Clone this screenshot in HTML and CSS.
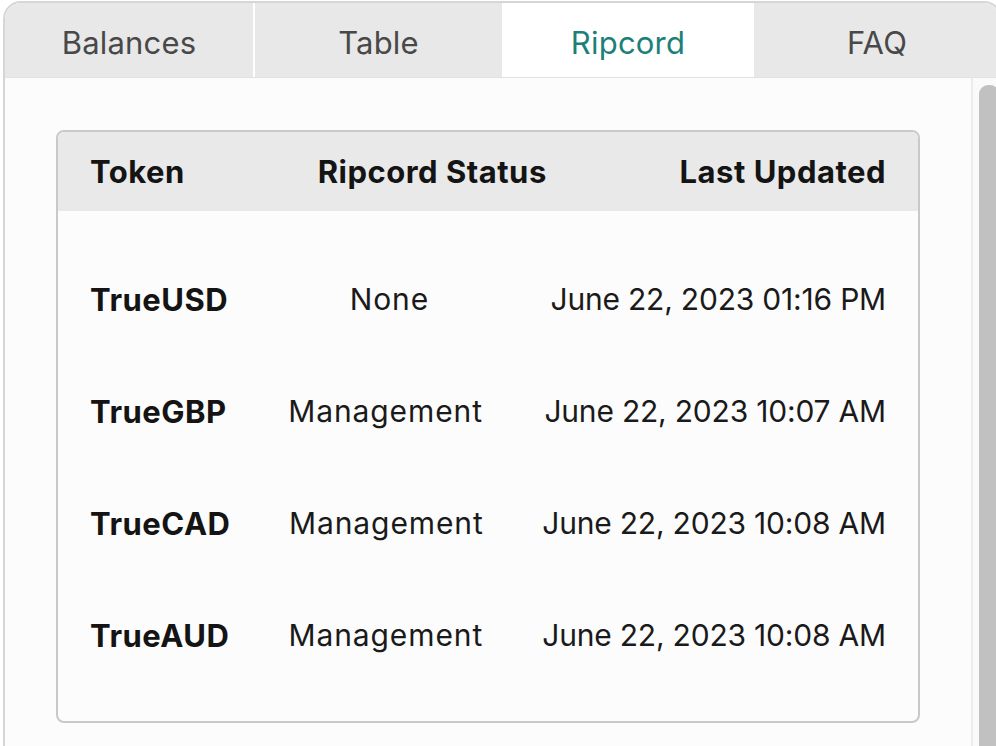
FILE: index.html
```html
<!DOCTYPE html>
<html>
<head>
<meta charset="utf-8">
<link rel="stylesheet" href="styles.css">
</head>
<body>
<div class="panel">
  <div class="tabs">
    <div class="tab">Balances</div>
    <div class="tab">Table</div>
    <div class="tab active">Ripcord</div>
    <div class="tab">FAQ</div>
  </div>
  <div class="content">
    <div class="main">
      <div class="card">
        <div class="row head">
          <span>Token</span>
          <span>Ripcord Status</span>
          <span>Last Updated</span>
        </div>
        <div class="body">
          <div class="row"><span class="token">TrueUSD</span><span class="status">None</span><span class="date">June 22, 2023 01:16 PM</span></div>
          <div class="row"><span class="token">TrueGBP</span><span class="status">Management</span><span class="date">June 22, 2023 10:07 AM</span></div>
          <div class="row"><span class="token">TrueCAD</span><span class="status">Management</span><span class="date">June 22, 2023 10:08 AM</span></div>
          <div class="row"><span class="token">TrueAUD</span><span class="status">Management</span><span class="date">June 22, 2023 10:08 AM</span></div>
        </div>
      </div>
    </div>
    <div class="scrollbar"><div class="thumb"></div></div>
  </div>
</div>
</body>
</html>
```
FILE: styles.css
```css
html, body {
  margin: 0;
  padding: 0;
  background: #ffffff;
  overflow: hidden;
}
body {
  width: 996px;
  height: 746px;
  font-family: Inter, "Liberation Sans", sans-serif;
}
.panel {
  margin: 1px 0 0 3px;
  width: 999px;
  height: 800px;
  box-sizing: border-box;
  border: 2px solid #d6d6d6;
  border-radius: 18px 18px 0 0;
  overflow: hidden;
  background: #fcfcfd;
  display: flex;
  flex-direction: column;
}
.tabs {
  display: flex;
  gap: 2px;
  background: #ffffff;
  border-bottom: 1px solid #e2e2e2;
  height: 74px;
  flex: none;
}
.tab {
  width: 248px;
  flex: none;
  background: #e8e8e8;
  display: flex;
  align-items: center;
  justify-content: center;
  font-size: 31px;
  color: #484848;
  padding-top: 4px;
  box-sizing: border-box;
  letter-spacing: 0.2px;
}
.tab:nth-child(2) { width: 247px; }
.tab:last-child { flex: 1; width: auto; }
.tab.active {
  background: #ffffff;
  color: #1c7f79;
}
.content {
  flex: 1;
  display: flex;
}
.main {
  width: 966px;
  flex: none;
  padding: 52px 51px 0 51px;
  box-sizing: border-box;
}
.card {
  border: 2px solid #c9c9c9;
  border-radius: 8px;
  overflow: hidden;
  background: #fcfcfd;
}
.row {
  display: flex;
  justify-content: space-between;
  align-items: center;
  padding: 0 32px 0 32px;
  font-size: 30px;
  color: #1a1a1a;
  height: 112px;
}
.row.head {
  height: 79px;
  background: #e9e9e9;
  font-weight: 700;
  font-size: 31px;
  letter-spacing: 0.5px;
  color: #141414;
  padding-top: 0;
  box-sizing: border-box;
}
.token {
  font-weight: 700;
  font-size: 31px;
  letter-spacing: 0.5px;
  color: #141414;
}
.status {
  letter-spacing: 0.9px;
}
.date {
  letter-spacing: -0.2px;
}
.body {
  padding: 32px 0 30px 0;
}
.scrollbar {
  width: 26px;
  flex: none;
  border-left: 2px solid #ececec;
  background: #fafafa;
  padding: 7px 0 0 6px;
  box-sizing: border-box;
}
.thumb {
  width: 20px;
  height: 900px;
  background: #c1c1c1;
  border-radius: 9px;
}
```
